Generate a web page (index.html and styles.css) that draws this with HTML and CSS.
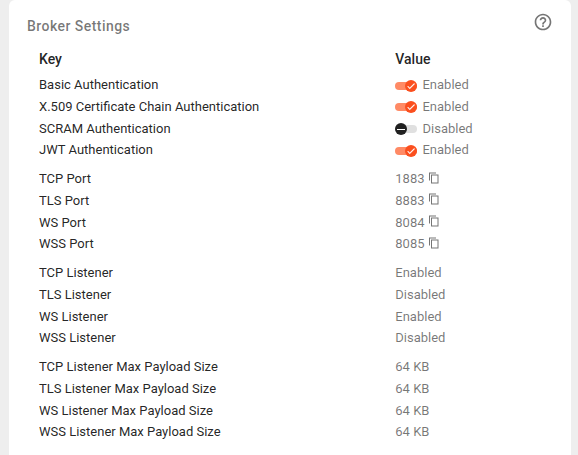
FILE: index.html
```html
<!DOCTYPE html>
<html lang="en">
<head>
<meta charset="utf-8">
<title>Broker Settings</title>
<link rel="stylesheet" href="styles.css">
</head>
<body>
<svg width="0" height="0" class="defs">
  <symbol id="copy" viewBox="0 0 24 24"><path d="M16 1H2v16h2V3h12V1zm5 4H6v18h15V5zm-2 16H8V7h11v14z"/></symbol>
  <symbol id="check" viewBox="0 0 24 24"><path d="M9 16.170 4.830 12l-1.420 1.410L9 19 21 7l-1.410-1.410z"/></symbol>
</svg>
<main class="card">
  <header class="card-header">
    <h1 class="title">Broker Settings</h1>
    <svg class="help" viewBox="0 0 24 24"><path d="M11 18h2v-2h-2v2zm1-16C6.480 2 2 6.480 2 12s4.480 10 10 10 10-4.480 10-10S17.520 2 12 2zm0 18c-4.410 0-8-3.590-8-8s3.590-8 8-8 8 3.590 8 8-3.590 8-8 8zm0-14c-2.210 0-4 1.790-4 4h2c0-1.100.9-2 2-2s2 .9 2 2c0 2-3 1.750-3 5h2c0-2.250 3-2.500 3-5 0-2.210-1.790-4-4-4z"/></svg>
  </header>
  <div class="row head"><span>Key</span><span>Value</span></div>
  <section class="group">
    <div class="row"><span>Basic Authentication</span><span class="value"><i class="toggle on"><b class="knob"><svg><use href="#check"/></svg></b></i>Enabled</span></div>
    <div class="row"><span>X.509 Certificate Chain Authentication</span><span class="value"><i class="toggle on"><b class="knob"><svg><use href="#check"/></svg></b></i>Enabled</span></div>
    <div class="row"><span>SCRAM Authentication</span><span class="value"><i class="toggle"><b class="knob"></b></i>Disabled</span></div>
    <div class="row"><span>JWT Authentication</span><span class="value"><i class="toggle on"><b class="knob"><svg><use href="#check"/></svg></b></i>Enabled</span></div>
  </section>
  <section class="group">
    <div class="row"><span>TCP Port</span><span class="value">1883<svg class="copy"><use href="#copy"/></svg></span></div>
    <div class="row"><span>TLS Port</span><span class="value">8883<svg class="copy"><use href="#copy"/></svg></span></div>
    <div class="row"><span>WS Port</span><span class="value">8084<svg class="copy"><use href="#copy"/></svg></span></div>
    <div class="row"><span>WSS Port</span><span class="value">8085<svg class="copy"><use href="#copy"/></svg></span></div>
  </section>
  <section class="group">
    <div class="row"><span>TCP Listener</span><span class="value">Enabled</span></div>
    <div class="row"><span>TLS Listener</span><span class="value">Disabled</span></div>
    <div class="row"><span>WS Listener</span><span class="value">Enabled</span></div>
    <div class="row"><span>WSS Listener</span><span class="value">Disabled</span></div>
  </section>
  <section class="group">
    <div class="row"><span>TCP Listener Max Payload Size</span><span class="value">64 KB</span></div>
    <div class="row"><span>TLS Listener Max Payload Size</span><span class="value">64 KB</span></div>
    <div class="row"><span>WS Listener Max Payload Size</span><span class="value">64 KB</span></div>
    <div class="row"><span>WSS Listener Max Payload Size</span><span class="value">64 KB</span></div>
  </section>
</main>
</body>
</html>
```
FILE: styles.css
```css
* { box-sizing: border-box; }
body { margin: 0; height: 455px; overflow: hidden; background: #eee; font: 13px/21.750px Roboto, sans-serif; color: rgba(0,0,0,.87); }
.defs { display: none; }
.card { margin: 0 7px 0 9px; height: 455px; background: #fff; border-radius: 6px 6px 0 0; }
.card-header { display: flex; justify-content: space-between; height: 49px; padding: 12px 18px 0 18px; color: rgba(0,0,0,.54); }
.title { margin: 3px 0 0; font-size: 14px; line-height: 22px; font-weight: 500; letter-spacing: .45px; }
.help { width: 20px; height: 20px; fill: currentColor; }
.row { display: grid; grid-template-columns: 356.300px 1fr; height: 21.750px; padding-left: 30px; align-items: center; }
.head { height: 22px; font-size: 14px; font-weight: 500; }
.group { margin-top: 3.125px; }
.group + .group { margin-top: 7px; }
.value { display: flex; align-items: center; color: rgba(0,0,0,.54); }
.copy { width: 12px; height: 12px; margin: -3px 0 0 3px; fill: currentColor; }
.toggle { display: flex; align-items: center; width: 21.700px; height: 8px; margin: 1px 5.500px 0 0; border-radius: 4px; background: #e0e0e0; }
.toggle.on { justify-content: flex-end; background: #ff8a65; }
.knob { display: flex; align-items: center; justify-content: center; width: 12px; height: 12px; flex: none; border-radius: 50%; background: #212121; }
.knob::before { content: ""; width: 8px; height: 1px; background: #fff; }
.on .knob { background: #fb4f1e; }
.on .knob::before { display: none; }
.knob svg { width: 10px; height: 10px; fill: #fff; stroke: #fff; stroke-width: .6; }
```
